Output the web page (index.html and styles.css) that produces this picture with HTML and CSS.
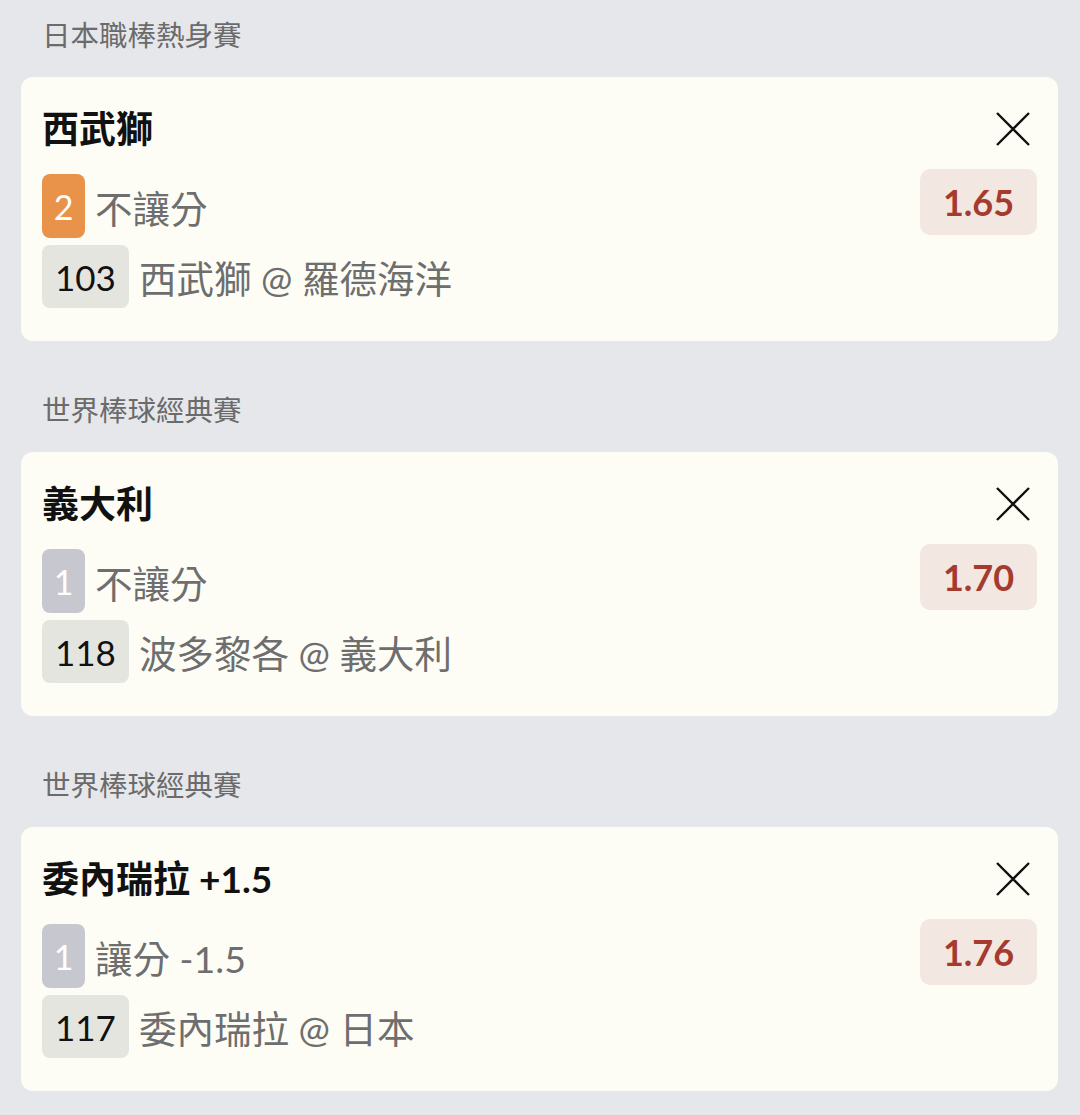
FILE: index.html
```html
<!DOCTYPE html>
<html lang="zh-Hant">
<head>
    <meta charset="UTF-8">
    <meta name="viewport" content="width=device-width, initial-scale=1.0">
    <title>投注單</title>
    <link rel="stylesheet" href="styles.css">
</head>
<body>

<div class="group">
    <div class="league">日本職棒熱身賽</div>
    <div class="card">
        <div class="info">
            <div class="pick">西武獅</div>
            <div class="line">
                <span class="tag tag-orange">2</span>
                <span class="text">不讓分</span>
            </div>
            <div class="line">
                <span class="code">103</span>
                <span class="text">西武獅 @ 羅德海洋</span>
            </div>
        </div>
        <div class="side">
            <div class="close">
                <svg width="34" height="34" viewBox="0 0 34 34"><path d="M1 1 L33 33 M33 1 L1 33" stroke="#111" stroke-width="2.4" fill="none"/></svg>
            </div>
            <div class="odds">1.65</div>
        </div>
    </div>
</div>

<div class="group">
    <div class="league">世界棒球經典賽</div>
    <div class="card">
        <div class="info">
            <div class="pick">義大利</div>
            <div class="line">
                <span class="tag tag-gray">1</span>
                <span class="text">不讓分</span>
            </div>
            <div class="line">
                <span class="code">118</span>
                <span class="text">波多黎各 @ 義大利</span>
            </div>
        </div>
        <div class="side">
            <div class="close">
                <svg width="34" height="34" viewBox="0 0 34 34"><path d="M1 1 L33 33 M33 1 L1 33" stroke="#111" stroke-width="2.4" fill="none"/></svg>
            </div>
            <div class="odds">1.70</div>
        </div>
    </div>
</div>

<div class="group">
    <div class="league">世界棒球經典賽</div>
    <div class="card">
        <div class="info">
            <div class="pick">委內瑞拉 +1.5</div>
            <div class="line">
                <span class="tag tag-gray">1</span>
                <span class="text">讓分 -1.5</span>
            </div>
            <div class="line">
                <span class="code">117</span>
                <span class="text">委內瑞拉 @ 日本</span>
            </div>
        </div>
        <div class="side">
            <div class="close">
                <svg width="34" height="34" viewBox="0 0 34 34"><path d="M1 1 L33 33 M33 1 L1 33" stroke="#111" stroke-width="2.4" fill="none"/></svg>
            </div>
            <div class="odds">1.76</div>
        </div>
    </div>
</div>

</body>
</html>
```

FILE: styles.css
```css
body {
    font-family: Lato, "Noto Sans CJK TC", sans-serif;
    background: #e6e7eb;
    margin: 0;
    padding: 15px 22px 0 21px;
}

.group {
    margin-bottom: 49px;
}

.league {
    font-size: 28.5px;
    line-height: 40px;
    color: #6b6b6b;
    padding-left: 21px;
    margin-bottom: 22px;
}

.card {
    background: #fdfdf6;
    border-radius: 12px;
    display: flex;
    justify-content: space-between;
    padding: 30px 21px 33px 21px;
}

.info {
    display: flex;
    flex-direction: column;
}

.pick {
    font-size: 37px;
    font-weight: bold;
    line-height: 44px;
    color: #111;
    margin-bottom: 23px;
}

.line {
    display: flex;
    align-items: center;
    margin-bottom: 7px;
}

.line:last-child {
    margin-bottom: 0;
}

.tag {
    width: 43px;
    height: 64px;
    border-radius: 8px;
    color: #fff;
    font-size: 34px;
    display: flex;
    align-items: center;
    justify-content: center;
}

.tag-orange { background: #e8924a; }
.tag-gray { background: #c7c7cf; }

.code {
    height: 63px;
    padding: 0 13px;
    border-radius: 8px;
    background: #e5e5df;
    color: #111;
    font-size: 35px;
    display: flex;
    align-items: center;
}

.text {
    font-size: 37.5px;
    color: #6e6e6e;
    margin-left: 10px;
}

.side {
    display: flex;
    flex-direction: column;
    align-items: flex-end;
}

.close {
    height: 44px;
    display: flex;
    align-items: center;
    margin-right: 7px;
    margin-bottom: 18px;
}

.close svg {
    display: block;
}

.odds {
    width: 117px;
    height: 66px;
    border-radius: 10px;
    background: #f3e7e1;
    color: #a53a2f;
    font-size: 36px;
    font-weight: bold;
    display: flex;
    align-items: center;
    justify-content: center;
}
```
